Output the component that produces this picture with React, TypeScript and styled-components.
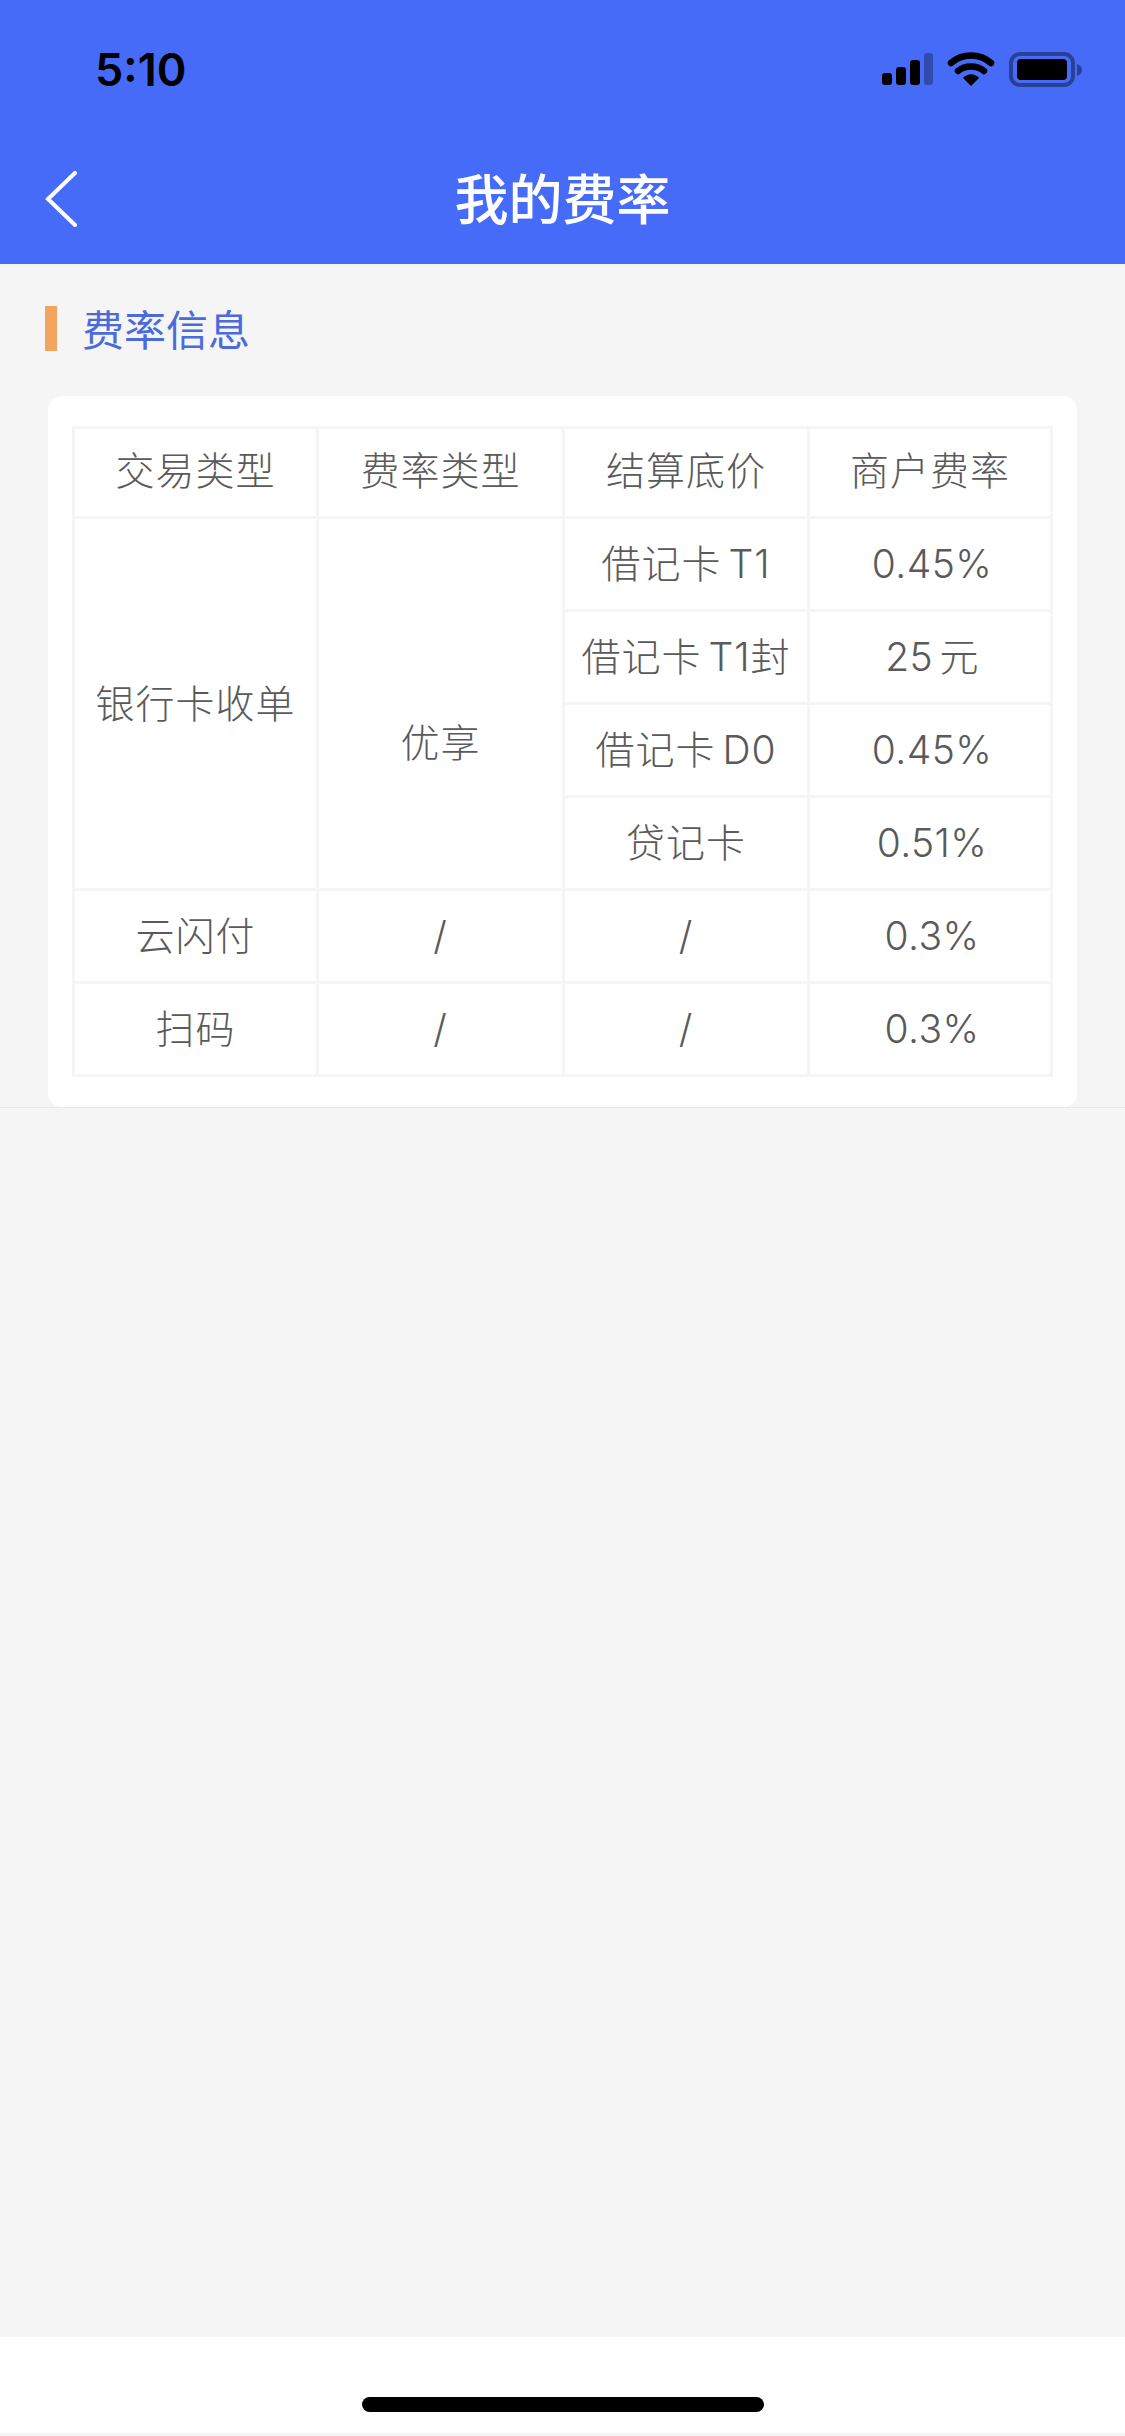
import React from "react";
import styled, { createGlobalStyle } from "styled-components";

const GlobalStyle = createGlobalStyle`
  html, body {
    margin: 0;
    padding: 0;
    background: #f5f5f5;
  }
  body {
    font-family: "Liberation Sans", "Noto Sans CJK SC", sans-serif;
  }
`;

const Page = styled.div`
  width: 1125px;
  height: 2436px;
  display: flex;
  flex-direction: column;
  background: #f5f5f5;
  overflow: hidden;
`;

const Header = styled.header`
  height: 264px;
  flex-shrink: 0;
  display: flex;
  flex-direction: column;
  background: #466bf8;
`;

const StatusBar = styled.div`
  height: 132px;
  box-sizing: border-box;
  padding: 48px 43px 0 95px;
  display: flex;
  justify-content: space-between;
  align-items: flex-start;
`;

const Time = styled.span`
  font-family: Inter, "Liberation Sans", sans-serif;
  font-size: 45px;
  line-height: 44px;
  font-weight: 600;
  color: #000;
`;

const StatusIcons = styled.svg`
  display: block;
  margin-top: 4px;
`;

const NavBar = styled.nav`
  height: 132px;
  display: grid;
  grid-template-columns: 200px 1fr 200px;
  align-items: center;
  padding-top: 2px;
  box-sizing: border-box;
`;

const BackButton = styled.button`
  width: 80px;
  height: 60px;
  margin: 0 0 0 44px;
  padding: 0;
  border: none;
  background: none;
  display: flex;
  align-items: center;
`;

const Title = styled.h1`
  margin: 0;
  padding-top: 4px;
  text-align: center;
  font-size: 54px;
  line-height: 60px;
  font-weight: 500;
  color: #fff;
`;

const Section = styled.section`
  height: 844px;
  box-sizing: border-box;
  flex-shrink: 0;
  padding: 42px 48px 0;
  border-bottom: 1px solid #e9e9e9;
`;

const SectionTitle = styled.h2`
  margin: 0 0 45px -3px;
  height: 45px;
  display: flex;
  align-items: center;
  font-size: 42px;
  line-height: 45px;
  font-weight: 400;
  color: #4b6bdc;

  &::before {
    content: "";
    width: 12px;
    height: 45px;
    margin-right: 25px;
    background: #f3a45f;
  }
`;

const SectionLabel = styled.span`
  padding-top: 6px;
`;

const Card = styled.div`
  box-sizing: border-box;
  height: 711px;
  padding: 30px 24px;
  background: #fff;
  border-radius: 14px;
`;

const RateTable = styled.table`
  width: 978px;
  table-layout: fixed;
  border-collapse: collapse;
`;

const Column = styled.col<{ $width: number }>`
  width: ${(p) => p.$width}px;
`;

const Row = styled.tr<{ $head?: boolean }>`
  height: ${(p) => (p.$head ? 90 : 93)}px;
`;

const Cell = styled.td<{ $lower?: boolean; $numeric?: boolean; $head?: boolean }>`
  padding: ${(p) => (p.$lower ? "78px 0 0" : p.$head ? "0 0 3px" : p.$numeric ? "0 0 0 4px" : "0")};
  border: 3px solid #f5f5f5;
  text-align: center;
  vertical-align: middle;
  font-family: Inter, "Noto Sans CJK SC", sans-serif;
  font-size: 39px;
  line-height: 46px;
  font-weight: 300;
  white-space: nowrap;
  letter-spacing: ${(p) => (p.$numeric ? "0.4px" : "1px")};
  word-spacing: -5px;
  color: #5a5a5a;
`;

const Spacer = styled.div`
  flex: 1;
`;

const HomeArea = styled.footer`
  height: 96px;
  flex-shrink: 0;
  margin-bottom: 3px;
  box-sizing: border-box;
  padding-top: 60px;
  background: #fff;
  display: flex;
  justify-content: center;
`;

const HomeBar = styled.div`
  width: 402px;
  height: 15px;
  border-radius: 8px;
  background: #000;
`;

const columnWidths = [244, 246, 245, 243];

const headers = ["交易类型", "费率类型", "结算底价", "商户费率"];

const cardRates = [
  { name: "借记卡 T1", rate: "0.45%" },
  { name: "借记卡 T1封", rate: "25 元" },
  { name: "借记卡 D0", rate: "0.45%" },
  { name: "贷记卡", rate: "0.51%" },
];

const otherRates = [
  { name: "云闪付", rate: "0.3%" },
  { name: "扫码", rate: "0.3%" },
];

export default function App() {
  return (
    <Page>
      <GlobalStyle />
      <Header>
        <StatusBar>
          <Time>5:10</Time>
          <StatusIcons width="200" height="36" viewBox="0 0 200 36">
            <rect x="0" y="21" width="10" height="12" rx="3" fill="#000" />
            <rect x="14" y="15" width="10" height="18" rx="3" fill="#000" />
            <rect x="28" y="8" width="10" height="25" rx="3" fill="#000" />
            <rect x="42" y="1" width="9" height="32" rx="3" fill="#000" opacity="0.3" />
            <path d="M69 11 C80 1 98 1 109 11" fill="none" stroke="#000" strokeWidth="6.5" strokeLinecap="round" />
            <path d="M76 19 C83 13 95 13 102 19" fill="none" stroke="#000" strokeWidth="6.5" strokeLinecap="round" />
            <path d="M81 26 C86 21 92 21 97 26 L89 34 Z" fill="#000" />
            <rect x="129" y="2" width="62" height="31" rx="9" fill="none" stroke="#000" strokeWidth="4" opacity="0.4" />
            <rect x="135" y="7" width="50" height="21" rx="4" fill="#000" />
            <path d="M195 12 C198 13 200 15 200 18 C200 21 198 23 195 24 Z" fill="#000" opacity="0.4" />
          </StatusIcons>
        </StatusBar>
        <NavBar>
          <BackButton aria-label="返回">
            <svg width="34" height="56" viewBox="0 0 34 56">
              <path d="M31 2 L4 28 L31 54" fill="none" stroke="#fff" strokeWidth="4" strokeLinecap="round" strokeLinejoin="miter" />
            </svg>
          </BackButton>
          <Title>我的费率</Title>
        </NavBar>
      </Header>
      <Section>
        <SectionTitle>
          <SectionLabel>费率信息</SectionLabel>
        </SectionTitle>
        <Card>
          <RateTable>
            <colgroup>
              {columnWidths.map((width, index) => (
                <Column key={index} $width={width} />
              ))}
            </colgroup>
            <tbody>
              <Row $head>
                {headers.map((text) => (
                  <Cell as="th" key={text} $head>
                    {text}
                  </Cell>
                ))}
              </Row>
              {cardRates.map((item, index) => (
                <Row key={item.name}>
                  {index === 0 && <Cell rowSpan={4}>银行卡收单</Cell>}
                  {index === 0 && (
                    <Cell rowSpan={4} $lower>
                      优享
                    </Cell>
                  )}
                  <Cell>{item.name}</Cell>
                  <Cell $numeric>{item.rate}</Cell>
                </Row>
              ))}
              {otherRates.map((item) => (
                <Row key={item.name}>
                  <Cell>{item.name}</Cell>
                  <Cell>/</Cell>
                  <Cell>/</Cell>
                  <Cell $numeric>{item.rate}</Cell>
                </Row>
              ))}
            </tbody>
          </RateTable>
        </Card>
      </Section>
      <Spacer />
      <HomeArea>
        <HomeBar />
      </HomeArea>
    </Page>
  );
}
